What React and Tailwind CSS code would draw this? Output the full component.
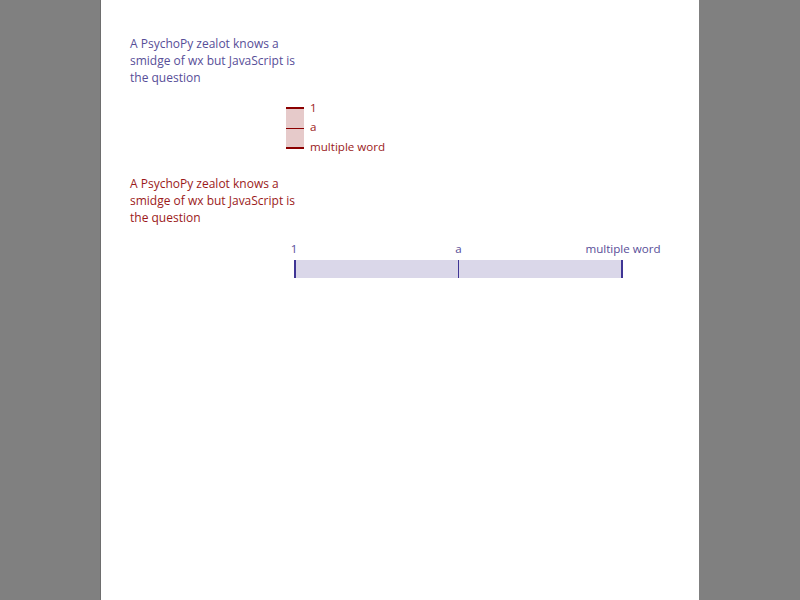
export default function App() {
  const font = { fontFamily: '"Open Sans", "Noto Sans", sans-serif' };
  return (
    <div className="w-[800px] h-[600px] bg-[#808080] flex" style={font}>
      <div className="ml-[100px] w-[599px] h-[600px] bg-white border-l border-[#6e6e6e] flex flex-col pl-[29px] pt-[35px]">
        <div className="text-[12px] leading-[17px] text-[#574e98]">
          A PsychoPy zealot knows a<br />smidge of wx but JavaScript is<br />the question
        </div>

        <div className="ml-[156px] mt-[12px] flex flex-row gap-[6px]">
          <div className="mt-[9px] w-[18px] h-[42px] bg-[#e6caca] flex flex-col justify-between">
            <div className="h-[2px] bg-[#8b0000]" />
            <div className="h-px bg-[#8b0000]" />
            <div className="h-[2px] bg-[#8b0000]" />
          </div>
          <div className="flex flex-col text-[11.6px] text-[#9b1a1a]">
            <span className="leading-[20px] h-[20px]">1</span>
            <span className="leading-[18px] h-[20px]">a</span>
            <span className="leading-[18px] h-[20px]">multiple word</span>
          </div>
        </div>

        <div className="mt-[17px] text-[12px] leading-[17px] text-[#9b1a1a]">
          A PsychoPy zealot knows a<br />smidge of wx but JavaScript is<br />the question
        </div>

        <div className="ml-[164px] mt-[15px] w-[329px] flex flex-col">
          <div className="flex flex-row justify-between text-[11.6px] leading-[16px] text-[#574e98] h-[16px]">
            <div className="w-0 flex justify-center whitespace-nowrap">1</div>
            <div className="w-0 flex justify-center whitespace-nowrap">a</div>
            <div className="w-0 flex justify-center whitespace-nowrap">multiple word</div>
          </div>
          <div className="mt-[3px] h-[18px] bg-[#dad7e9] flex flex-row justify-between">
            <div className="w-[2px] bg-[#3f3595]" />
            <div className="w-px bg-[#3f3595]" />
            <div className="w-[2px] bg-[#3f3595]" />
          </div>
        </div>
      </div>
    </div>
  );
}
